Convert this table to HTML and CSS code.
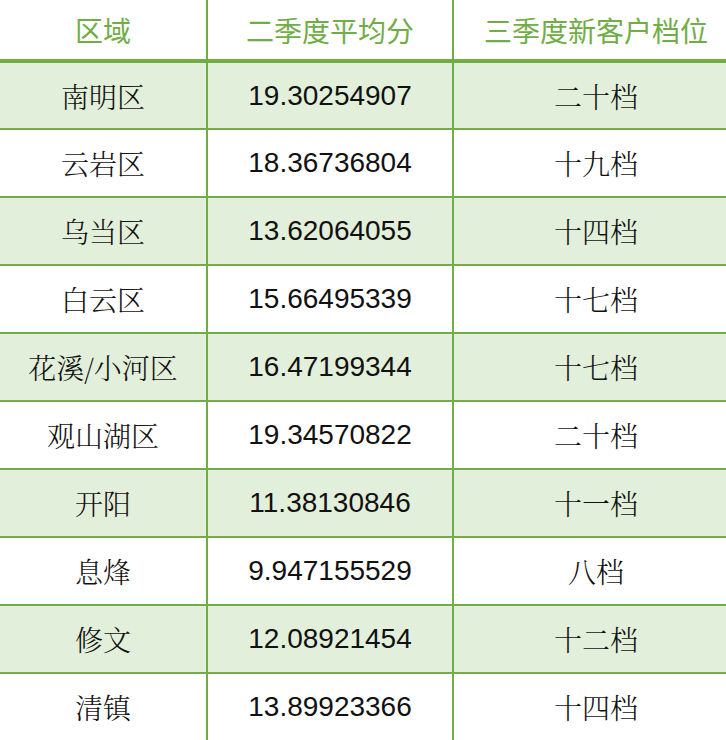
FILE: index.html
```html
<!DOCTYPE html>
<html lang="zh-CN">
<head>
<meta charset="utf-8">
<title>区域档位</title>
<link rel="stylesheet" href="styles.css">
</head>
<body>
<table class="grid">
  <colgroup>
    <col class="c1"><col class="c2"><col class="c3">
  </colgroup>
  <thead>
    <tr class="head">
      <th>区域</th><th>二季度平均分</th><th>三季度新客户档位</th>
    </tr>
  </thead>
  <tbody>
    <tr class="alt"><td class="zh">南明区</td><td class="num">19.30254907</td><td class="zh">二十档</td></tr>
    <tr><td class="zh">云岩区</td><td class="num">18.36736804</td><td class="zh">十九档</td></tr>
    <tr class="alt"><td class="zh">乌当区</td><td class="num">13.62064055</td><td class="zh">十四档</td></tr>
    <tr><td class="zh">白云区</td><td class="num">15.66495339</td><td class="zh">十七档</td></tr>
    <tr class="alt"><td class="zh">花溪/小河区</td><td class="num">16.47199344</td><td class="zh">十七档</td></tr>
    <tr><td class="zh">观山湖区</td><td class="num">19.34570822</td><td class="zh">二十档</td></tr>
    <tr class="alt"><td class="zh">开阳</td><td class="num">11.38130846</td><td class="zh">十一档</td></tr>
    <tr><td class="zh">息烽</td><td class="num">9.947155529</td><td class="zh">八档</td></tr>
    <tr class="alt"><td class="zh">修文</td><td class="num">12.08921454</td><td class="zh">十二档</td></tr>
    <tr><td class="zh">清镇</td><td class="num">13.89923366</td><td class="zh">十四档</td></tr>
  </tbody>
</table>
</body>
</html>
```
FILE: styles.css
```css
html, body {
  margin: 0;
  padding: 0;
  background: #ffffff;
  overflow: hidden;
}

body {
  width: 726px;
  height: 740px;
}

.grid {
  width: 738px;
  border-collapse: collapse;
  table-layout: fixed;
}

.c1 { width: 207px; }
.c2 { width: 246px; }
.c3 { width: 285px; }

.grid th,
.grid td {
  padding: 0;
  text-align: center;
  vertical-align: middle;
  font-size: 28px;
  line-height: 1;
}

.grid th + th,
.grid td + td {
  border-left: 2px solid #70ad47;
}

.head th {
  height: 59px;
  color: #70ad47;
  font-family: "Noto Sans CJK SC", "Liberation Sans", sans-serif;
  font-weight: 400;
  border-bottom: 4px solid #70ad47;
}

.grid tbody tr {
  height: 68px;
}

.grid tbody td {
  border-bottom: 2px solid #70ad47;
  color: #111111;
}

.grid tbody tr.alt td {
  background: #e2efda;
}

.zh {
  font-family: "Noto Serif CJK SC", "AR PL UMing CN", "Noto Sans CJK SC", serif;
  font-weight: 300;
}

.num {
  font-family: "Liberation Sans", Arial, sans-serif;
}
```
